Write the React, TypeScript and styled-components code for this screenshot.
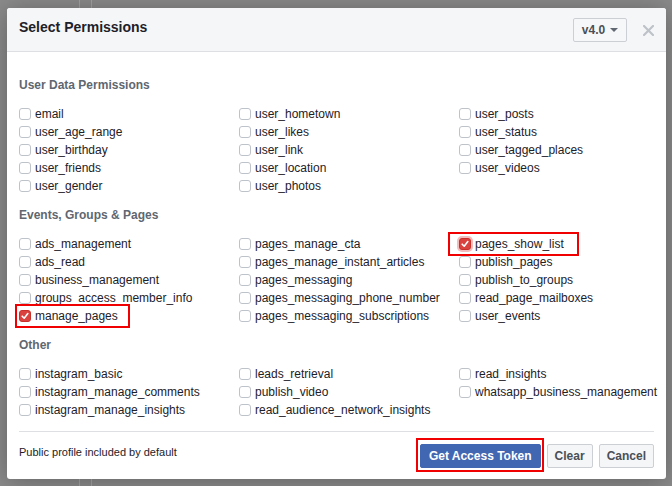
import * as React from 'react';
import styled, { createGlobalStyle } from 'styled-components';

const GlobalStyle = createGlobalStyle`
  html, body {
    margin: 0;
    padding: 0;
    width: 672px;
    height: 486px;
    overflow: hidden;
    background-color: #8b8b8b;
    background-image:
      linear-gradient(90deg, transparent 79px, #a3a3a3 79px, #a3a3a3 80px, transparent 80px),
      linear-gradient(90deg, transparent 91px, #a3a3a3 91px, #a3a3a3 92px, transparent 92px);
    font-family: "Liberation Sans", Arial, Helvetica, sans-serif;
  }
`;

const Backdrop = styled.div`
  padding: 8px 6px 0 7px;
  box-sizing: border-box;
  width: 672px;
  height: 486px;
`;

const Dialog = styled.div`
  width: 659px;
  height: 471px;
  background: #fff;
  border-radius: 3px;
  box-shadow: 0 2px 26px rgba(0, 0, 0, 0.3);
  display: flex;
  flex-direction: column;
  overflow: hidden;
`;

const Header = styled.div`
  height: 44px;
  box-sizing: border-box;
  background: #f5f6f7;
  border-bottom: 1px solid #dddfe2;
  display: flex;
  align-items: center;
  padding: 0 10px 0 12px;
`;

const Title = styled.h2`
  margin: 0;
  flex: 1;
  font-size: 14px;
  font-weight: bold;
  color: #1d2129;
  position: relative;
  top: -2px;
`;

const VersionSelect = styled.div`
  width: 54px;
  height: 24px;
  box-sizing: border-box;
  border: 1px solid #ccd0d5;
  border-radius: 2px;
  background: #f6f7f9;
  display: flex;
  align-items: center;
  justify-content: center;
  gap: 5px;
  font-size: 12px;
  font-weight: bold;
  color: #4b4f56;
  margin-top: 2px;
`;

const Caret = styled.span`
  width: 0;
  height: 0;
  border-left: 4px solid transparent;
  border-right: 4px solid transparent;
  border-top: 4px solid #606770;
`;

const CloseButton = styled.button`
  border: 0;
  background: none;
  padding: 0;
  margin: 2px 0 0 13px;
  width: 16px;
  height: 16px;
  display: flex;
  align-items: center;
  justify-content: center;
  cursor: pointer;
`;

const Body = styled.div`
  flex: 1;
  padding: 25px 12px 0 12px;
`;

const Section = styled.section`
  margin-bottom: 12px;
`;

const SectionTitle = styled.h3`
  margin: 0 0 12px 0;
  font-size: 12px;
  line-height: 16px;
  font-weight: bold;
  color: #606770;
`;

const Grid = styled.div<{ $rows: number }>`
  display: grid;
  grid-template-columns: 220px 220px 1fr;
  grid-auto-flow: column;
  grid-template-rows: repeat(${p => p.$rows}, 18px);
`;

const Row = styled.label`
  position: relative;
  display: flex;
  align-items: center;
  height: 18px;
  font-size: 12px;
  color: #1d2129;
  white-space: nowrap;
  cursor: pointer;
`;

const Box = styled.span<{ $checked?: boolean; $focused?: boolean }>`
  width: 12px;
  height: 12px;
  box-sizing: border-box;
  margin-right: 4px;
  border-radius: 3px;
  border: 1px solid ${p => (p.$checked ? '#c9302c' : '#bec3c9')};
  background: ${p => (p.$checked ? '#d9423e' : '#fff')};
  box-shadow: ${p => (p.$focused ? '0 0 0 2px rgba(217, 66, 62, 0.35)' : 'none')};
  display: flex;
  align-items: center;
  justify-content: center;
`;

const Mark = styled.span<{ $left: number; $width: number }>`
  position: absolute;
  top: -3px;
  bottom: -3px;
  left: ${p => p.$left}px;
  width: ${p => p.$width}px;
  box-sizing: border-box;
  border: 2px solid #f00000;
  pointer-events: none;
`;

const Footer = styled.div`
  margin: 0 12px;
  border-top: 1px solid #dddfe2;
  height: 47px;
  display: flex;
  align-items: center;
  gap: 6px;
  padding-top: 1px;
`;

const Note = styled.div`
  flex: 1;
  font-size: 11px;
  color: #1d2129;
  position: relative;
  top: -4px;
`;

const Button = styled.button<{ $primary?: boolean }>`
  position: relative;
  height: 24px;
  box-sizing: border-box;
  padding: 0 ${p => (p.$primary ? 8 : 7)}px;
  border-radius: 2px;
  border: 1px solid ${p => (p.$primary ? '#4267b2' : '#ccd0d5')};
  background: ${p => (p.$primary ? '#4267b2' : '#f5f6f7')};
  color: ${p => (p.$primary ? '#fff' : '#4b4f56')};
  font-family: "Liberation Sans", Arial, sans-serif;
  font-size: 12px;
  font-weight: bold;
  cursor: pointer;
`;

const ButtonMark = styled.span`
  position: absolute;
  top: -7px;
  bottom: -5px;
  left: -5px;
  right: -4px;
  border: 2px solid #f00000;
  pointer-events: none;
`;

type Perm = { name: string; checked?: boolean; focused?: boolean; mark?: [number, number] };

const userData: Perm[][] = [
  [{ name: 'email' }, { name: 'user_age_range' }, { name: 'user_birthday' }, { name: 'user_friends' }, { name: 'user_gender' }],
  [{ name: 'user_hometown' }, { name: 'user_likes' }, { name: 'user_link' }, { name: 'user_location' }, { name: 'user_photos' }],
  [{ name: 'user_posts' }, { name: 'user_status' }, { name: 'user_tagged_places' }, { name: 'user_videos' }],
];

const events: Perm[][] = [
  [
    { name: 'ads_management' },
    { name: 'ads_read' },
    { name: 'business_management' },
    { name: 'groups_access_member_info' },
    { name: 'manage_pages', checked: true, mark: [-4, 115] },
  ],
  [
    { name: 'pages_manage_cta' },
    { name: 'pages_manage_instant_articles' },
    { name: 'pages_messaging' },
    { name: 'pages_messaging_phone_number' },
    { name: 'pages_messaging_subscriptions' },
  ],
  [
    { name: 'pages_show_list', checked: true, focused: true, mark: [-11, 131] },
    { name: 'publish_pages' },
    { name: 'publish_to_groups' },
    { name: 'read_page_mailboxes' },
    { name: 'user_events' },
  ],
];

const other: Perm[][] = [
  [{ name: 'instagram_basic' }, { name: 'instagram_manage_comments' }, { name: 'instagram_manage_insights' }],
  [{ name: 'leads_retrieval' }, { name: 'publish_video' }, { name: 'read_audience_network_insights' }],
  [{ name: 'read_insights' }, { name: 'whatsapp_business_management' }],
];

const Check = () => (
  <svg width="8" height="8" viewBox="0 0 8 8">
    <path d="M1.2 4.2 L3.2 6.2 L6.8 1.6" fill="none" stroke="#fff" strokeWidth="1.6" strokeLinecap="round" strokeLinejoin="round" />
  </svg>
);

const PermissionGroup = ({ title, columns }: { title: string; columns: Perm[][] }) => {
  const rows = Math.max(...columns.map(c => c.length));
  return (
    <Section>
      <SectionTitle>{title}</SectionTitle>
      <Grid $rows={rows}>
        {columns.map((col, ci) =>
          Array.from({ length: rows }).map((_, ri) => {
            const p = col[ri];
            if (!p) return <span key={`${ci}-${ri}`} />;
            return (
              <Row key={p.name}>
                <Box $checked={p.checked} $focused={p.focused}>{p.checked && <Check />}</Box>
                {p.name}
                {p.mark && <Mark $left={p.mark[0]} $width={p.mark[1]} />}
              </Row>
            );
          })
        )}
      </Grid>
    </Section>
  );
};

const App = () => (
  <>
    <GlobalStyle />
    <Backdrop>
      <Dialog>
        <Header>
          <Title>Select Permissions</Title>
          <VersionSelect>
            v4.0 <Caret />
          </VersionSelect>
          <CloseButton aria-label="Close">
            <svg width="11" height="11" viewBox="0 0 11 11">
              <path d="M1 1 L10 10 M10 1 L1 10" stroke="#bec3c9" strokeWidth="2.2" strokeLinecap="round" />
            </svg>
          </CloseButton>
        </Header>
        <Body>
          <PermissionGroup title="User Data Permissions" columns={userData} />
          <PermissionGroup title="Events, Groups & Pages" columns={events} />
          <PermissionGroup title="Other" columns={other} />
        </Body>
        <Footer>
          <Note>Public profile included by default</Note>
          <Button $primary>
            Get Access Token
            <ButtonMark />
          </Button>
          <Button>Clear</Button>
          <Button>Cancel</Button>
        </Footer>
      </Dialog>
    </Backdrop>
  </>
);

export default App;
